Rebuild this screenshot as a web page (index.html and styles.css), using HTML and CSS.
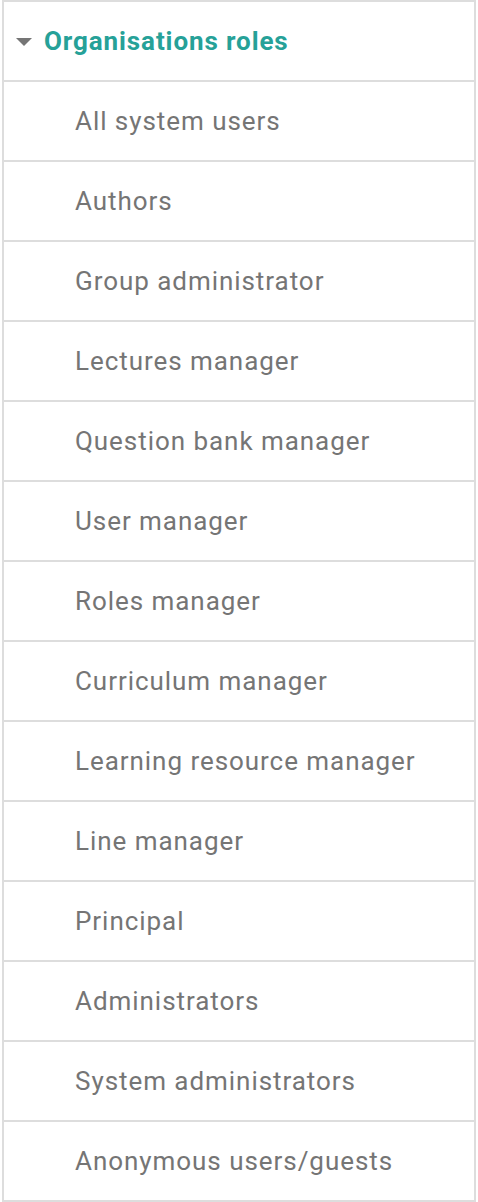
FILE: index.html
```html
<!DOCTYPE html>
<html lang="en">

<head>
  <meta charset="UTF-8" />
  <meta name="viewport" content="width=device-width, initial-scale=1.0" />
  <title>Organisations roles</title>
  <link rel="stylesheet" href="styles.css">
</head>

<body>
  <!-- Collapsible list of organisation roles -->
  <div class="role-tree">
    <div class="role-head">
      <span class="caret"></span>
      <span class="role-title">Organisations roles</span>
    </div>
    <div class="role-item">All system users</div>
    <div class="role-item">Authors</div>
    <div class="role-item">Group administrator</div>
    <div class="role-item">Lectures manager</div>
    <div class="role-item">Question bank manager</div>
    <div class="role-item">User manager</div>
    <div class="role-item">Roles manager</div>
    <div class="role-item">Curriculum manager</div>
    <div class="role-item">Learning resource manager</div>
    <div class="role-item">Line manager</div>
    <div class="role-item">Principal</div>
    <div class="role-item">Administrators</div>
    <div class="role-item">System administrators</div>
    <div class="role-item">Anonymous users/guests</div>
  </div>
</body>

</html>
```

FILE: styles.css
```css
body {
  margin: 0;
  font-family: Roboto, "Liberation Sans", sans-serif;
  background: #fff;
}

/* Outer box of the tree */
.role-tree {
  box-sizing: border-box;
  width: 474px;
  margin-left: 2px;
  border: 2px solid #ddd;
  border-bottom: none;
}

.role-head,
.role-item {
  height: 78px;
  display: flex;
  align-items: center;
  border-bottom: 2px solid #ddd;
  letter-spacing: 0.95px;
}

.role-head {
  padding-left: 12px;
}

/* Small down-pointing triangle */
.caret {
  width: 0;
  height: 0;
  border-left: 8px solid transparent;
  border-right: 8px solid transparent;
  border-top: 8px solid #757575;
  margin-right: 12px;
  margin-top: 1px;
}

.role-title {
  color: #26a198;
  font-size: 26px;
  font-weight: bold;
  letter-spacing: 0.9px;
}

.role-item {
  padding-left: 71px;
  color: #757575;
  font-size: 26px;
}
```
